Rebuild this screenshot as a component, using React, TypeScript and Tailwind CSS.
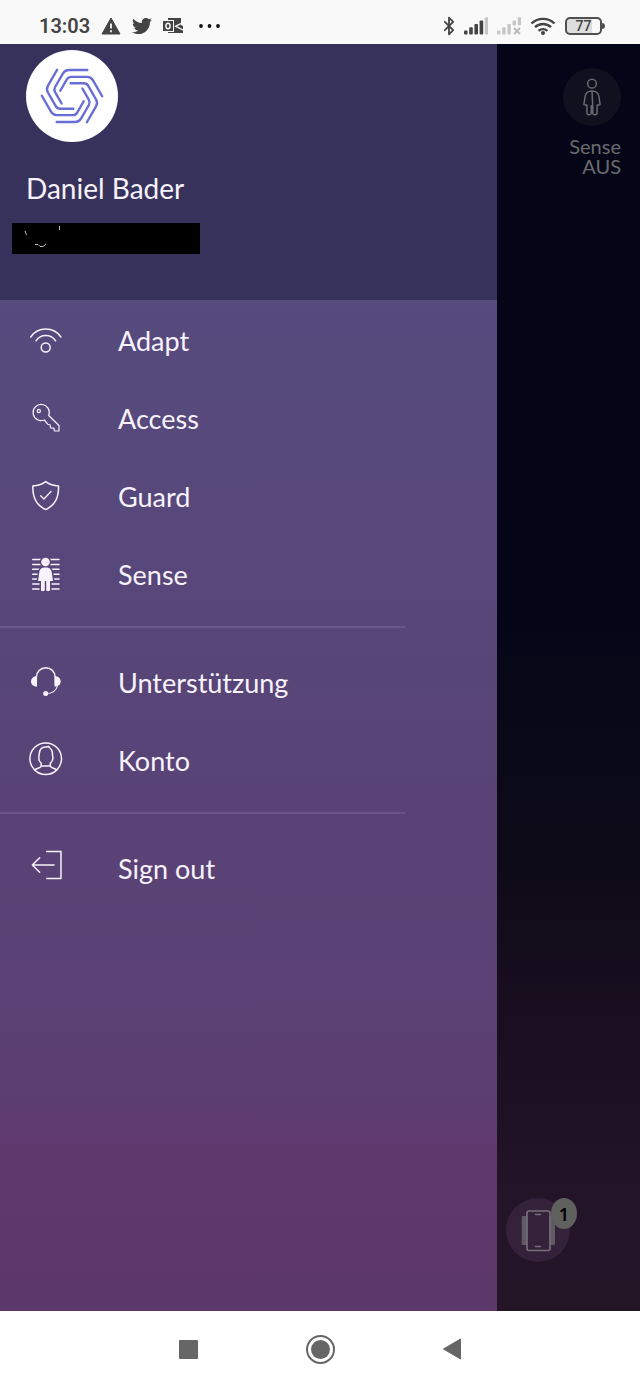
import type { ReactNode } from "react"
import { Bluetooth } from "lucide-react"
import { FaTwitter } from "react-icons/fa"

function LineIcon({ children }: { children: ReactNode }) {
  return (
    <svg
      viewBox="0 0 36 36"
      className="h-9 w-9 shrink-0 overflow-visible"
      fill="none"
      stroke="currentColor"
      strokeWidth="1.5"
      strokeLinecap="round"
      strokeLinejoin="round"
      aria-hidden="true"
    >
      {children}
    </svg>
  )
}

const AdaptIcon = () => (
  <LineIcon>
    <path d="M2.7 16A18.4 18.4 0 0 1 32.9 16M8 19.8A11.6 11.6 0 0 1 27.6 19.8" />
    <circle cx="17.7" cy="26.5" r="4.5" />
  </LineIcon>
)

const AccessIcon = () => (
  <LineIcon>
    <g strokeWidth="1.2">
      <path d="M16.3 21A8.1 8.1 0 1 1 20.7 16.5L31 26.5V32H26.6L25.8 29.2L22.5 28.8L22.2 26L19.7 25.2Z" />
      <circle cx="10.8" cy="12" r="1.6" />
    </g>
  </LineIcon>
)

const GuardIcon = () => (
  <LineIcon>
    <path d="M17.7 4.6C21.5 7.4 26 8.8 30.5 8.9C31 20 27 28.5 17.7 32.6C8.4 28.5 4.4 20 4.9 8.9C9.4 8.8 13.9 7.4 17.7 4.6Z" />
    <path d="M12.7 18.7L15.9 22L23 14.5" strokeWidth="1.3" />
  </LineIcon>
)

const SenseIcon = () => (
  <LineIcon>
    <path d="M4.7 4.5H31M4.7 9.4H31M4.7 14.3H31M4.7 19.2H31M4.7 24.1H31M4.7 29H31M4.7 34H31" />
    <g fill="#574679" stroke="#574679" strokeWidth="3">
      <circle cx="17.5" cy="7" r="4.3" />
      <path d="M17.5 12.5C13 12.5 11.5 14.5 11.2 18L10.3 25H13V35.5H22V25H24.7L23.8 18C23.5 14.5 22 12.5 17.5 12.5Z" />
    </g>
    <g fill="currentColor" stroke="none">
      <circle cx="17.5" cy="7" r="4.3" />
      <path d="M17.5 12.5C13 12.5 11.5 14.5 11.2 18L10 26H13V35C13 36.6 16.8 36.6 16.8 35V26H18.2V35C18.2 36.6 22 36.6 22 35V26H25L23.8 18C23.5 14.5 22 12.5 17.5 12.5Z" />
    </g>
  </LineIcon>
)

const SupportIcon = () => (
  <LineIcon>
    <path d="M8.3 22V14.5A9.5 9.8 0 0 1 27.3 14.5V22" />
    <path d="M29.5 22.5C28.5 27.5 24.5 30.5 17.7 30.8" strokeWidth="1.1" />
    <g fill="currentColor" stroke="none">
      <path d="M9 13V23.7C5.5 23.5 3 21.5 3 18.5S5.5 13.3 9 13Z" />
      <path d="M26.7 13V23.7C30.2 23.5 32.7 21.5 32.7 18.5S30.2 13.3 26.7 13Z" />
      <circle cx="17.7" cy="30.6" r="2.5" />
    </g>
  </LineIcon>
)

const AccountIcon = () => (
  <LineIcon>
    <circle cx="17.7" cy="17.7" r="15.8" />
    <path d="M7 28.8C9 26.8 12.8 27.5 13.2 24.8V22.2C11.3 20.5 10.4 18.5 10.9 16.2C11.5 13 10.5 10.5 13.2 7.5C15.5 5.5 18.5 6.5 20.5 5.3C21 6.8 23.5 7.6 24.2 10.5C24.6 12.7 24.3 14.3 24.9 16.5C25.2 18.7 24 20.7 22.3 22.2V24.8C22.7 27.5 26.5 26.8 28.4 28.8M13.2 25H22.3" />
  </LineIcon>
)

const SignOutIcon = () => (
  <LineIcon>
    <path d="M18.7 2.5H33V29.5H18.7M26 16H4.3M11.7 8.7L4.3 16L11.7 23.3" />
  </LineIcon>
)

const groups = [
  [
    { label: "Adapt", icon: AdaptIcon },
    { label: "Access", icon: AccessIcon },
    { label: "Guard", icon: GuardIcon },
    { label: "Sense", icon: SenseIcon },
  ],
  [
    { label: "Unterstützung", icon: SupportIcon },
    { label: "Konto", icon: AccountIcon },
  ],
  [{ label: "Sign out", icon: SignOutIcon }],
]

const bars = [0, 1, 2, 3, 4]

function StatusBar() {
  return (
    <header className="flex h-11 items-center justify-between bg-[#f9f9f9] pt-2 pr-[35px] pl-[39px] font-['Roboto',sans-serif] text-[#444]">
      <div className="flex items-center gap-[11px]">
        <span className="text-xl leading-5 font-semibold">13:03</span>
        <svg viewBox="0 0 20 18" className="h-[18px] w-5" aria-hidden="true">
          <path d="M10 1L19 17H1Z" fill="currentColor" stroke="currentColor" strokeLinejoin="round" />
          <path d="M10 6.5V11.5M10 13.2V15.2" stroke="#f9f9f9" strokeWidth="1.8" />
        </svg>
        <FaTwitter className="h-5 w-5" />
        <svg viewBox="0 0 20 18" className="h-[18px] w-5" aria-hidden="true">
          <path d="M5 1H18V8L20 9V16H5Z" fill="currentColor" />
          <path d="M20 5.5L12.5 9.3L20 13" fill="none" stroke="#f9f9f9" strokeWidth="1.3" />
          <path d="M-1 3H11V15H-1Z" fill="#f9f9f9" />
          <path d="M0 4H10V14H0Z" fill="currentColor" />
          <ellipse cx="5" cy="9" rx="2.1" ry="2.8" fill="none" stroke="#f9f9f9" strokeWidth="1.4" />
        </svg>
        <svg viewBox="0 0 24 4" className="ml-1 h-1 w-6 text-[#111]" fill="currentColor" aria-hidden="true">
          <circle cx="3" cy="2" r="1.9" />
          <circle cx="11.5" cy="2" r="1.9" />
          <circle cx="20" cy="2" r="1.9" />
        </svg>
      </div>

      <div className="flex items-center gap-[9px]">
        <Bluetooth className="-mr-1 h-[22px] w-5" strokeWidth={2.2} />
        <svg viewBox="0 0 24 18" className="h-[18px] w-6" aria-hidden="true">
          {bars.map((i) => (
            <rect
              key={i}
              x={i * 5.2}
              y={13.5 - i * 3.3}
              width="3.6"
              height={4 + i * 3.3}
              rx="1"
              fill={i === 4 ? "#c6c6c6" : "#444"}
            />
          ))}
        </svg>
        <svg viewBox="0 0 24 18" className="h-[18px] w-6" aria-hidden="true">
          <g fill="#c6c6c6">
            {bars.map((i) => (
              <rect
                key={i}
                x={i * 5.2}
                y={13.5 - i * 3.3}
                width="3.4"
                height={i < 3 ? 4 + i * 3.3 : i * 3 - 4}
                rx="1"
              />
            ))}
          </g>
          <path d="M17 11L23 17M23 11L17 17" stroke="#bbb" strokeWidth="2" />
        </svg>
        <svg viewBox="0 0 26 20" className="h-5 w-[26px]" fill="none" stroke="currentColor" strokeWidth="2.4" aria-hidden="true">
          <path d="M1.5 7.5A16.5 16.5 0 0 1 24.5 7.5M5 11.2A11.5 11.5 0 0 1 21 11.2M8.6 14.8A6.5 6.5 0 0 1 17.4 14.8" />
          <circle cx="13" cy="17" r="2" fill="currentColor" stroke="none" />
        </svg>
        <div className="flex items-center">
          <div className="flex h-[18px] w-[37px] items-center justify-center rounded-[5px] border-2 border-[#505050] bg-[linear-gradient(90deg,#dedede_75%,#f9f9f9_75%)] text-sm leading-none font-medium">
            77
          </div>
          <div className="h-1.5 w-[3px] rounded-r-sm bg-[#505050]" />
        </div>
      </div>
    </header>
  )
}

function Logo() {
  return (
    <svg viewBox="-46 -46 92 92" className="h-[92px] w-[92px] rounded-full bg-white" aria-hidden="true">
      <g fill="none" stroke="#686ed6" strokeWidth="2.4" strokeLinecap="round">
        {[0, 60, 120, 180, 240, 300].map((angle) => (
          <path
            key={angle}
            d="M15.3 -26H-3Q-7 -26 -9 -22.6L-16.9 -9Q-18.4 -6.4 -16.9 -3.8L-10.4 7.5"
            transform={`rotate(${angle})`}
          />
        ))}
      </g>
    </svg>
  )
}

function Drawer() {
  return (
    <aside className="flex min-w-0 flex-1 flex-col bg-[linear-gradient(180deg,#564b7e_20%,#594376_60%,#5b3f73_82%,#60396f_87%,#5c3769_100%)] text-[#f7f2fb]">
      <div className="h-64 bg-[#37325c] pt-1.5">
        <div className="pl-[26px]">
          <Logo />
          <p className="mt-7 text-[28px] leading-9">Daniel Bader</p>
        </div>
        <div className="mt-[17px] ml-3 h-[31px] w-[188px] bg-black">
          <svg viewBox="0 0 188 31" fill="none" stroke="#bbb" aria-hidden="true">
            <path d="M13 8L14.5 12M47.5 3V7M23 21.5H26L28 23.5H31L34 21" />
          </svg>
        </div>
      </div>

      <nav>
        {groups.map((items, i) => (
          <div key={i}>
            {i > 0 && <hr className="my-3.5 mr-[92px] border-t-2 border-white/10" />}
            <ul>
              {items.map((item) => (
                <li key={item.label}>
                  <a href="#" className="flex h-[78px] items-center gap-[54px] pl-7 text-[27px] leading-8">
                    <item.icon />
                    <span className="pt-[3px]">{item.label}</span>
                  </a>
                </li>
              ))}
            </ul>
          </div>
        ))}
      </nav>
    </aside>
  )
}

function Backdrop() {
  return (
    <section className="flex w-[143px] shrink-0 flex-col justify-between bg-[linear-gradient(180deg,#040617_45%,#0e0b18_65%,#1b0f21_80%,#241428_92%,#231426_100%)] pt-6 pb-[49px]">
      <div className="flex flex-col items-end pr-[19px] text-[#6a6a6e]">
        <button type="button" aria-label="Sense" className="flex h-[58px] w-[58px] items-center justify-center rounded-full bg-[#0f111e]">
          <svg viewBox="0 0 24 40" className="h-10 w-6" fill="none" stroke="currentColor" strokeWidth="1.5" strokeLinejoin="round" aria-hidden="true">
            <circle cx="12" cy="6.7" r="4.4" />
            <path d="M12 14C7.5 14 5.5 16 5 20L3.9 27.500Q4 28.300 6.900 28V35.500C6.900 38.500 11.300 38.500 11.300 35.500V28M12.700 28V35.500C12.700 38.500 17.100 38.500 17.100 35.500V28Q20 28.300 20.100 27.500L19 20C18.500 16 16.500 14 12 14Z" />
          </svg>
        </button>
        <p className="mt-2.5 text-right text-xl leading-5">
          Sense
          <br />
          AUS
        </p>
      </div>

      <button type="button" className="relative ml-[9px] h-16 w-16 rounded-full bg-[#34213a]">
        <svg viewBox="0 0 64 64" className="h-16 w-16" fill="none" aria-hidden="true">
          <path d="M15.7 19Q15.7 18 17 18H48Q49 18 49 19V46Q49 47 48 47H17Q15.7 47 15.7 46Z" fill="#615a64" />
          <rect x="21" y="13" width="23" height="39.5" rx="2" fill="#34213a" stroke="#77727a" strokeWidth="1.6" />
          <path d="M29 16.5H35M29 48.5H35" stroke="#77727a" strokeWidth="1.3" />
        </svg>
        <span className="absolute top-0 left-[45px] flex h-[31px] w-[26px] items-center justify-center rounded-[50%] bg-[#60605f] font-['Noto_Sans',sans-serif] text-lg leading-none font-semibold text-black">
          1
        </span>
      </button>
    </section>
  )
}

function NavigationBar() {
  return (
    <footer className="flex h-[76px] items-center justify-center gap-22 bg-white text-[#666]">
      <button type="button" aria-label="Recent apps" className="flex h-11 w-11 items-center justify-center">
        <span className="h-[19px] w-[19px] rounded-[1px] bg-current" />
      </button>
      <button type="button" aria-label="Home" className="flex h-11 w-11 items-center justify-center">
        <span className="flex h-[29px] w-[29px] items-center justify-center rounded-full border-2 border-current">
          <span className="h-[19px] w-[19px] rounded-full bg-current" />
        </span>
      </button>
      <button type="button" aria-label="Back" className="flex h-11 w-11 items-center justify-center">
        <svg viewBox="0 0 20 22" className="h-[22px] w-5" aria-hidden="true">
          <path d="M1.5 11L18.5 1V21Z" fill="currentColor" stroke="currentColor" strokeLinejoin="round" />
        </svg>
      </button>
    </footer>
  )
}

export default function App() {
  return (
    <div className="flex min-h-screen flex-col font-['Lato',sans-serif]">
      <StatusBar />
      <main className="flex flex-1">
        <Drawer />
        <Backdrop />
      </main>
      <NavigationBar />
    </div>
  )
}
